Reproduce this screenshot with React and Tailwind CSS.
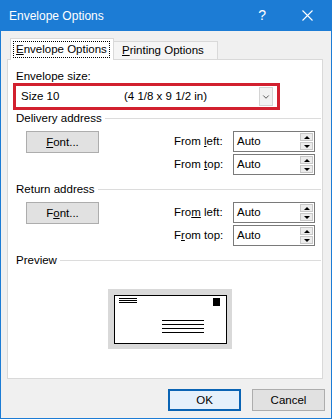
import { ChevronDown } from 'lucide-react'

const font = { fontFamily: '"Liberation Sans", Arial, sans-serif' }

function Key({ children }) {
  return <span className="underline underline-offset-[1px]">{children}</span>
}

function GroupHeader({ label, className = '' }) {
  return (
    <div className={`flex h-[14px] items-center pl-[8px] pr-[1px] ${className}`}>
      <span className="leading-[14px]">{label}</span>
      <div className="ml-[3px] h-px flex-1 bg-[#dcdcdc]" />
    </div>
  )
}

function Spinner() {
  return (
    <div className="flex h-full w-[82px] border border-[#7a7a7a] bg-white">
      <span className="flex-1 pl-[3px] leading-[19px]">Auto</span>
      <div className="my-[1px] mr-[1px] flex w-[13px] flex-col gap-px">
        <div className="flex flex-1 items-center justify-center border border-[#c8c8c8] bg-[#ececec]">
          <div className="h-0 w-0 border-x-[3px] border-b-[3px] border-x-transparent border-b-black" />
        </div>
        <div className="flex flex-1 items-center justify-center border border-[#c8c8c8] bg-[#ececec]">
          <div className="h-0 w-0 border-x-[3px] border-t-[3px] border-x-transparent border-t-black" />
        </div>
      </div>
    </div>
  )
}

function FontButton({ k }) {
  return (
    <button className="ml-[18px] h-[22px] w-[73px] border border-[#adadad] bg-[#e1e1e1] leading-[20px]">
      {k === 'F' ? (
        <>
          <Key>F</Key>ont...
        </>
      ) : (
        <>
          F<Key>o</Key>nt...
        </>
      )}
    </button>
  )
}

function AddressRows({ fontKey, left, top }) {
  return (
    <div className="flex">
      <div className="w-[166px]">
        <FontButton k={fontKey} />
      </div>
      <div className="flex flex-col gap-[2px]">
        <div className="flex h-[21px] items-center">
          <span className="w-[59px]">{left}</span>
          <Spinner />
        </div>
        <div className="flex h-[21px] items-center">
          <span className="w-[59px]">{top}</span>
          <Spinner />
        </div>
      </div>
    </div>
  )
}

function EnvelopePreview() {
  return (
    <svg width="124" height="60" viewBox="0 0 124 60" className="ml-[100px] block">
      <rect x="0" y="0" width="124" height="60" fill="#d9d9d9" />
      <rect x="6.5" y="6.5" width="112" height="48" fill="#fff" stroke="#000" />
      <line x1="11" y1="9.5" x2="29" y2="9.5" stroke="#000" />
      <line x1="11" y1="11.5" x2="29" y2="11.5" stroke="#000" />
      <line x1="11" y1="13.5" x2="29" y2="13.5" stroke="#000" />
      <rect x="105" y="9" width="7" height="8" fill="#000" />
      <line x1="54" y1="31.5" x2="96" y2="31.5" stroke="#000" />
      <line x1="54" y1="35.5" x2="96" y2="35.5" stroke="#000" />
      <line x1="54" y1="39.5" x2="96" y2="39.5" stroke="#000" />
      <line x1="54" y1="43.5" x2="96" y2="43.5" stroke="#000" />
    </svg>
  )
}

export default function App() {
  return (
    <div className="flex h-[419px] w-[332px] flex-col text-[11.5px] text-black" style={font}>
      {/* Title bar */}
      <div className="flex h-[31px] items-center bg-[#1c7cd5] pl-[9px] text-white">
        <span className="text-[12px]">Envelope Options</span>
        <span className="ml-auto mr-[36px] text-[14px]">?</span>
        <svg width="11" height="11" viewBox="0 0 11 11" className="mr-[19px]">
          <path d="M0.5 0.5 L10.5 10.5 M10.5 0.5 L0.5 10.5" stroke="#fff" strokeWidth="1.1" />
        </svg>
      </div>

      <div className="flex flex-1 flex-col border-x border-b border-[#1c7cd5] bg-[#f0f0f0] px-[6px] pt-[7px]">
        {/* Tabs */}
        <div className="relative z-10 flex h-[21px] items-end pl-[3px]">
          <div className="-mb-px flex h-[22px] w-[104px] items-center whitespace-nowrap border border-b-0 border-[#d9d9d9] bg-white px-[2px]">
            <span className="border border-dotted border-black px-[2px] leading-[15px]">
              <Key>E</Key>nvelope Options
            </span>
          </div>
          <div className="flex h-[18px] w-[104px] items-center whitespace-nowrap border border-b-0 border-l-0 border-[#d9d9d9] bg-[#f5f5f5] pl-[8px]">
            <Key>P</Key>rinting Options
          </div>
        </div>

        {/* Panel */}
        <div className="h-[320px] w-[316px] border border-[#d9d9d9] bg-white">
          <div className="mt-[9px] h-[14px] pl-[8px] leading-[14px]">Envelope size:</div>
          <div className="ml-[5px] h-[27px] w-[267px] border-[3px] border-[#d2202f] bg-white">
            <div className="flex h-full items-center pl-[5px]">
              <span className="w-[103px]">Size 10</span>
              <span>(4 1/8 x 9 1/2 in)</span>
              <div className="ml-auto mr-[4px] flex h-[19px] w-[14px] items-center justify-center border border-[#d4d4d4] bg-[#f2f2f2]">
                <ChevronDown size={10} strokeWidth={1.5} />
              </div>
            </div>
          </div>

          <GroupHeader label="Delivery address" className="mt-[1px]" />
          <div className="mt-[6px]">
            <AddressRows
              fontKey="F"
              left={<>From <Key>l</Key>eft:</>}
              top={<>From <Key>t</Key>op:</>}
            />
          </div>

          <GroupHeader label="Return address" className="mt-[7px]" />
          <div className="mt-[6px]">
            <AddressRows
              fontKey="o"
              left={<>Fro<Key>m</Key> left:</>}
              top={<>F<Key>r</Key>om top:</>}
            />
          </div>

          <GroupHeader label="Preview" className="mt-[7px]" />
          <div className="mt-[22px]">
            <EnvelopePreview />
          </div>
        </div>

        {/* Footer buttons */}
        <div className="mt-[10px] flex justify-end gap-[11px]">
          <button className="h-[22px] w-[73px] border-2 border-[#0a64b4] bg-[#e5f1fb] leading-[18px]">OK</button>
          <button className="h-[22px] w-[73px] border border-[#adadad] bg-[#e1e1e1] leading-[20px]">Cancel</button>
        </div>
      </div>
    </div>
  )
}
